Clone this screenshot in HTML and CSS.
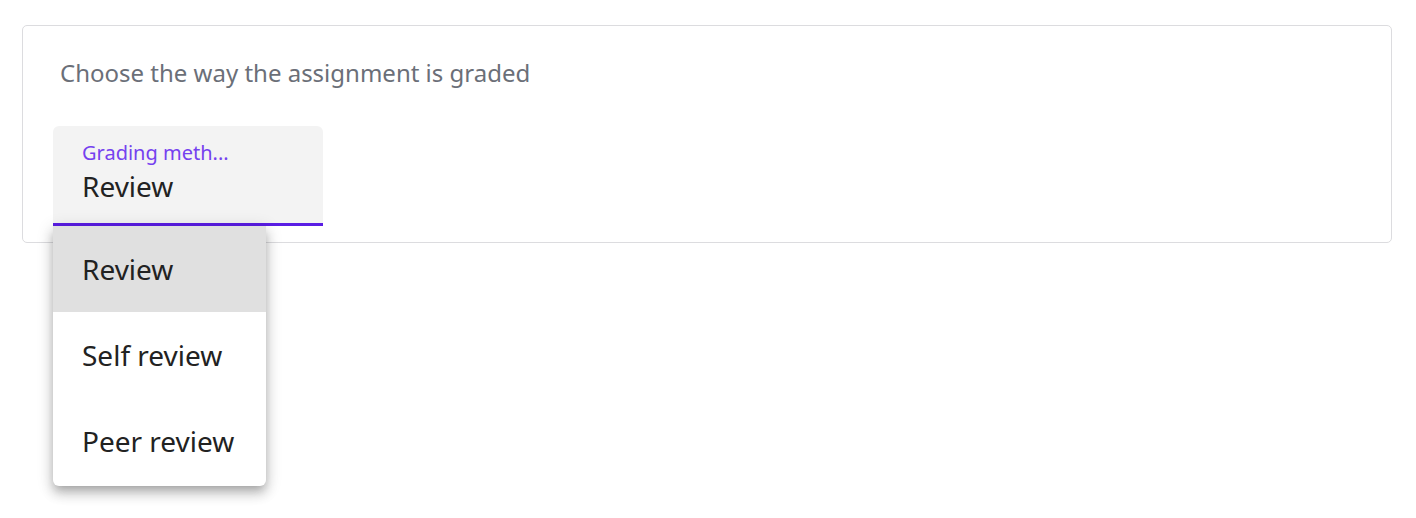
FILE: index.html
```html
<!DOCTYPE html>
<html lang="en">
<head>
<meta charset="utf-8">
<title>Grading method</title>
<link rel="stylesheet" href="styles.css">
</head>
<body>
<div class="page">
  <h2 class="section-title">Assigning grading type</h2>
  <div class="card">
    <p class="hint">Choose the way the assignment is graded</p>
    <div class="select-wrap">
      <div class="select">
        <span class="select-label">Grading meth...</span>
        <span class="select-value">Review</span>
      </div>
      <ul class="menu">
        <li class="menu-item selected">Review</li>
        <li class="menu-item">Self review</li>
        <li class="menu-item">Peer review</li>
      </ul>
    </div>
  </div>
</div>
</body>
</html>
```

FILE: styles.css
```css
* { box-sizing: border-box; }
html, body { margin: 0; padding: 0; background: #fff; }
body {
  font-family: "Noto Sans", "Lato", "Liberation Sans", sans-serif;
  color: #222;
  width: 1416px;
  height: 518px;
  overflow: hidden;
}
.page {
  padding: 0 24px 0 22px;
}
.section-title {
  margin: -24px 0 0 0;
  height: 49px;
  padding-left: 62px;
  font-size: 20px;
  font-weight: 400;
  line-height: 24px;
  color: #444;
}
.card {
  border: 1px solid #dcdcdf;
  border-radius: 5px;
  height: 218px;
  padding: 32px 30px 0 30px;
}
.hint {
  margin: 0 0 0 7px;
  font-size: 24px;
  line-height: 30px;
  color: #6b6f78;
}
.select-wrap {
  position: relative;
  width: 270px;
  margin-top: 38px;
}
.select {
  display: flex;
  flex-direction: column;
  height: 100px;
  background: #f3f3f3;
  border-radius: 6px 6px 0 0;
  border-bottom: 3px solid #5a1de4;
  padding: 14px 0 0 29px;
}
.select-label {
  font-size: 20px;
  line-height: 26px;
  color: #7541ef;
}
.select-value {
  font-size: 28px;
  line-height: 34px;
  color: #222;
  margin-top: 3px;
}
.menu {
  position: absolute;
  top: 100px;
  left: 0;
  width: 213px;
  margin: 0;
  padding: 0 0 2px 0;
  list-style: none;
  background: #fff;
  border-radius: 0 0 6px 6px;
  box-shadow: 0 5px 8px -3px rgba(0,0,0,0.2), 0 8px 12px 1px rgba(0,0,0,0.14), 0 3px 16px 2px rgba(0,0,0,0.12);
  z-index: 2;
}
.menu-item {
  height: 86px;
  display: flex;
  align-items: center;
  padding-left: 29px;
  font-size: 28px;
  color: #222;
}
.menu-item.selected {
  background: #e0e0e0;
}
```
